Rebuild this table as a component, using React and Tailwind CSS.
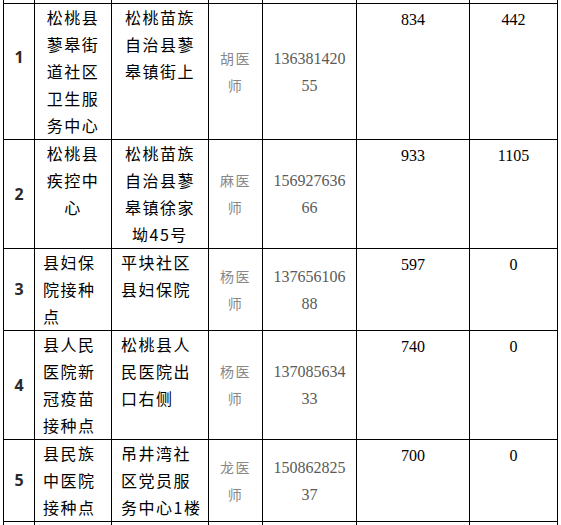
import React from "react";

const rows = [
  {
    no: "1",
    name: ["松桃县", "蓼皋街", "道社区", "卫生服", "务中心"],
    addr: ["松桃苗族", "自治县蓼", "皋镇街上"],
    center: true,
    doc: "胡",
    phone: ["136381420", "55"],
    a: "834",
    b: "442",
    noShift: "pb-[28px]",
  },
  {
    no: "2",
    name: ["松桃县", "疾控中", "心"],
    addr: ["松桃苗族", "自治县蓼", "皋镇徐家", "坳45号"],
    center: true,
    doc: "麻",
    phone: ["156927636", "66"],
    a: "933",
    b: "1105",
    noShift: "",
  },
  {
    no: "3",
    name: ["县妇保", "院接种", "点"],
    addr: ["平块社区", "县妇保院"],
    center: false,
    doc: "杨",
    phone: ["137656106", "88"],
    a: "597",
    b: "0",
    noShift: "",
  },
  {
    no: "4",
    name: ["县人民", "医院新", "冠疫苗", "接种点"],
    addr: ["松桃县人", "民医院出", "口右侧"],
    center: false,
    doc: "杨",
    phone: ["137085634", "33"],
    a: "740",
    b: "0",
    noShift: "",
  },
  {
    no: "5",
    name: ["县民族", "中医院", "接种点"],
    addr: ["吊井湾社", "区党员服", "务中心1楼"],
    center: false,
    doc: "龙",
    phone: ["150862825", "37"],
    a: "700",
    b: "0",
    noShift: "",
  },
];

const cjk = "[font-family:'Noto_Sans_CJK_SC','Noto_Sans',sans-serif]";

function Lines({ lines }) {
  return lines.map((l, i) => <div key={i}>{l}</div>);
}

export default function App() {
  return (
    <div className="w-[561px] h-[525px] overflow-hidden bg-white">
      <div className="ml-[3px] w-[555px] grid grid-cols-[30px_76px_96px_53px_93px_112px_87px] grid-rows-[3px_135px_108px_81px_108px_81px_20px] gap-px px-px bg-black leading-[27px]">
        {/* cut-off row above */}
        {Array.from({ length: 7 }).map((_, i) => (
          <div key={"t" + i} className="bg-white" />
        ))}

        {rows.map((r) => (
          <React.Fragment key={r.no}>
            <div
              className={`bg-white flex items-center justify-center text-[16px] font-bold text-[#2a2a2a] [font-family:'Noto_Sans',sans-serif] ${r.noShift}`}
            >
              {r.no}
            </div>
            <div
              className={`bg-white text-[16px] text-black tracking-[1.5px] ${cjk} ${
                r.center ? "text-center" : "pl-[8px]"
              }`}
            >
              <Lines lines={r.name} />
            </div>
            <div
              className={`bg-white text-[16px] text-black tracking-[1.5px] ${cjk} ${
                r.center ? "text-center" : "pl-[9px]"
              }`}
            >
              <Lines lines={r.addr} />
            </div>
            <div
              className={`bg-white flex flex-col justify-center items-center text-[14px] text-[#888] tracking-[1.5px] ${cjk}`}
            >
              <div>{r.doc}医</div>
              <div>师</div>
            </div>
            <div className="bg-white flex flex-col justify-center items-center text-[16px] text-[#5a5a5a] [font-family:'Liberation_Serif',serif]">
              <div>{r.phone[0]}</div>
              <div>{r.phone[1]}</div>
            </div>
            <div className="bg-white pt-[2px] text-center text-[16px] text-black [font-family:'Liberation_Serif',serif]">
              {r.a}
            </div>
            <div className="bg-white pt-[2px] text-center text-[16px] text-black [font-family:'Liberation_Serif',serif]">
              {r.b}
            </div>
          </React.Fragment>
        ))}

        {/* next row, cut off */}
        {Array.from({ length: 7 }).map((_, i) => (
          <div key={"b" + i} className="bg-white" />
        ))}
      </div>
    </div>
  );
}
